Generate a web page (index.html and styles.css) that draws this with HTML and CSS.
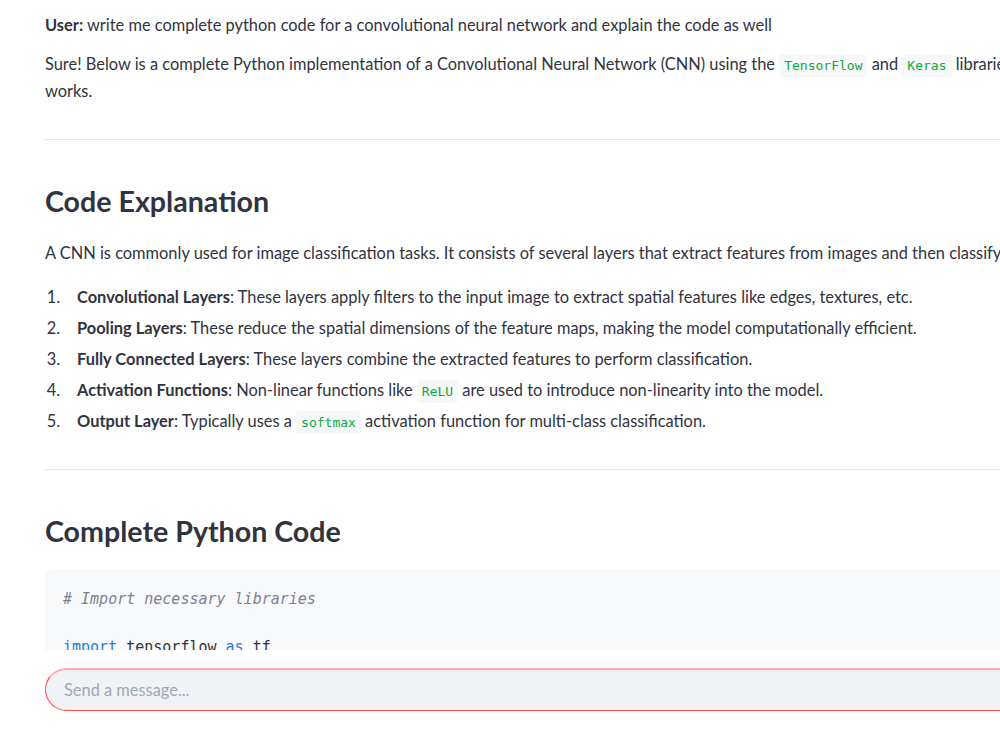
FILE: index.html
```html
<!DOCTYPE html>
<html lang="en">
<head>
  <meta charset="UTF-8">
  <title>CNN Chat</title>
  <link rel="stylesheet" href="styles.css">
</head>
<body>

  <!-- Chat history -->
  <div class="main">
    <div class="chat">
      <p class="user-line"><strong>User:</strong> write me complete python code for a convolutional neural network and explain the code as well</p>
      <p class="answer">Sure! Below is a complete Python implementation of a Convolutional Neural Network (CNN) using the <code>TensorFlow</code> and <code>Keras</code> libraries, along with an explanation of how it<br>works.</p>

      <hr>

      <h2>Code Explanation</h2>
      <p>A CNN is commonly used for image classification tasks. It consists of several layers that extract features from images and then classify them.</p>
      <ol>
        <li><strong>Convolutional Layers</strong>: These layers apply filters to the input image to extract spatial features like edges, textures, etc.</li>
        <li><strong>Pooling Layers</strong>: These reduce the spatial dimensions of the feature maps, making the model computationally efficient.</li>
        <li><strong>Fully Connected Layers</strong>: These layers combine the extracted features to perform classification.</li>
        <li><strong>Activation Functions</strong>: Non-linear functions like <code>ReLU</code> are used to introduce non-linearity into the model.</li>
        <li><strong>Output Layer</strong>: Typically uses a <code>softmax</code> activation function for multi-class classification.</li>
      </ol>

      <hr>

      <h2>Complete Python Code</h2>
      <pre class="code-block"><span class="cm"># Import necessary libraries</span>

<span class="kw">import</span> tensorflow <span class="kw">as</span> tf
<span class="kw">from</span> tensorflow.keras <span class="kw">import</span> layers, models
</pre>
    </div>
  </div>

  <!-- Chat input -->
  <div class="bottom">
    <div class="chat-input">Send a message...</div>
  </div>

</body>
</html>
```

FILE: styles.css
```css
/* Reset */
body, html {
  margin: 0;
  padding: 0;
  height: 100%;
  overflow: hidden;
  background: #fff;
  color: #31333f;
  font-family: Lato, "Noto Sans", sans-serif;
  font-size: 16.4px;
}

/* Scrolling chat area */
.main {
  height: 650px;
  overflow: hidden;
}

.chat {
  width: 1400px;
  padding: 11px 0 0 45px;
}

p {
  margin: 0;
  line-height: 27px;
}

.user-line {
  margin-bottom: 12px;
}

strong {
  font-weight: 700;
}

code {
  font-family: "DejaVu Sans Mono", monospace;
  font-size: 13px;
  line-height: 1;
  color: #09ab3b;
  background: #f6f7f9;
  padding: 4px 5px;
  border-radius: 4px;
}

hr {
  border: none;
  border-top: 1px solid #e6e7ea;
  margin: 35px 0 44px;
}

h2 {
  margin: 0 0 20px;
  font-size: 28.6px;
  line-height: 35px;
  font-weight: 700;
}

ol {
  margin: 17px 0 1px;
  padding-left: 32px;
}

ol li {
  line-height: 27px;
  margin-bottom: 4px;
}

ol li::marker {
  content: counter(list-item) ".\00a0\00a0\00a0\00a0";
  color: #31333f;
}

/* Code block */
.code-block {
  margin: 0;
  padding: 18px 18px;
  background: #f8f9fb;
  border-radius: 8px;
  font-family: "DejaVu Sans Mono", monospace;
  font-size: 15px;
  line-height: 24px;
  color: #31333f;
}

.cm {
  color: #7d8191;
  font-style: italic;
}

.kw {
  color: #2a7ae2;
}

/* Bottom chat input */
.bottom {
  height: 100px;
  padding: 18px 0 0 45px;
  box-sizing: border-box;
}

.chat-input {
  width: 1100px;
  height: 43px;
  box-sizing: border-box;
  border: 1px solid #ff4b4b;
  border-top: 2px solid #f9abab;
  border-radius: 22px;
  background: #f0f2f6;
  color: #a3a8b8;
  padding-left: 18px;
  line-height: 40px;
}
```
